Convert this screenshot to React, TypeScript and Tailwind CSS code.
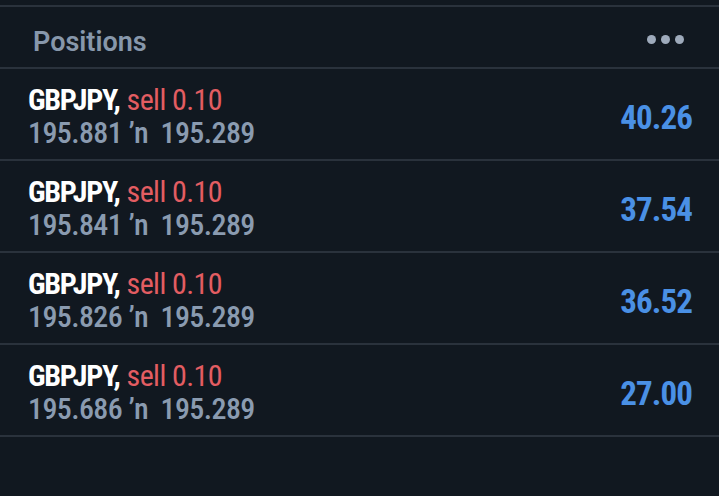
import React from "react";

const rows = [
  { open: "195.881", cur: "195.289", profit: "40.26" },
  { open: "195.841", cur: "195.289", profit: "37.54" },
  { open: "195.826", cur: "195.289", profit: "36.52" },
  { open: "195.686", cur: "195.289", profit: "27.00" },
];

export default function App() {
  return (
    <div className="w-[719px] h-[496px] bg-[#111820] pt-[5px] overflow-hidden">
      <div className="border-t-2 border-[#2a323c]">
        <div className="h-[62px] flex items-center justify-between pl-[33px] pr-[35px] border-b-2 border-[#2a323c]">
          <span className="mt-[10px] font-['Roboto',sans-serif] font-semibold text-[27px] text-[#8797ab] leading-none">
            Positions
          </span>
          <div className="mt-[4px] flex gap-[5px]">
            <span className="w-[9px] h-[9px] rounded-full bg-[#9eaabb]" />
            <span className="w-[9px] h-[9px] rounded-full bg-[#9eaabb]" />
            <span className="w-[9px] h-[9px] rounded-full bg-[#9eaabb]" />
          </div>
        </div>
        {rows.map((r, i) => (
          <div
            key={i}
            className="h-[92px] pt-[4px] flex items-center justify-between pl-[28px] pr-[27px] border-b-2 border-[#2a323c] font-['Roboto_Condensed',Roboto,sans-serif] font-stretch-condensed"
          >
            <div className="flex flex-col leading-[33px] text-[30px]">
              <div>
                <span className="text-white font-bold tracking-[-1.3px]">GBPJPY,</span>{" "}
                <span className="text-[#e35d62] tracking-[-0.6px]">sell 0.10</span>
              </div>
              <div className="text-[#8a9bb0] font-medium whitespace-pre tracking-[-0.6px]">
                {r.open + " ’n  " + r.cur}
              </div>
            </div>
            <div className="mt-[4px] text-[#4a90e5] font-bold text-[33px] leading-[36px] tracking-[-0.9px]">{r.profit}</div>
          </div>
        ))}
      </div>
    </div>
  );
}
